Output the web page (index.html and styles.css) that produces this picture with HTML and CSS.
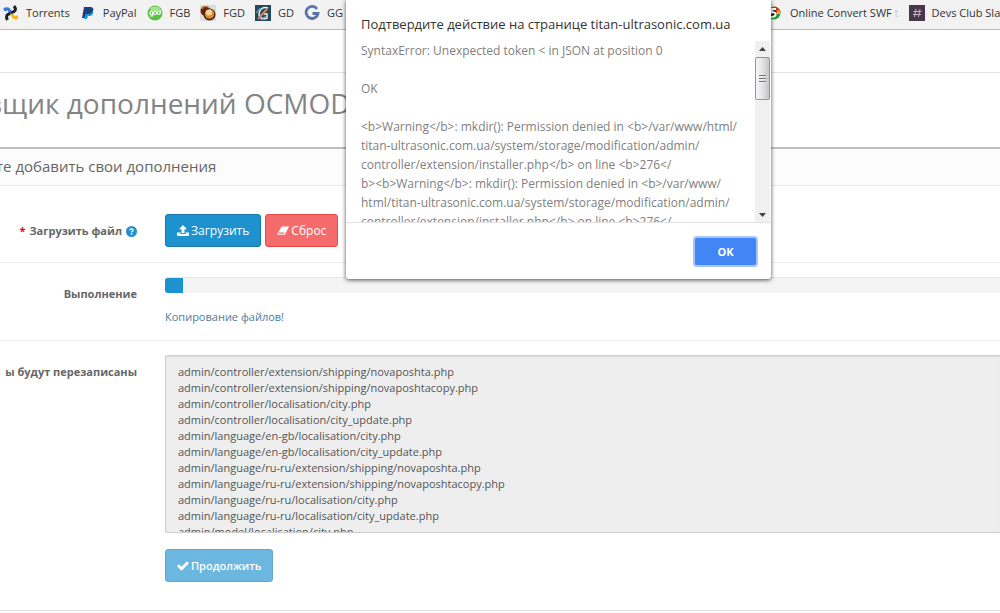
FILE: index.html
```
<!DOCTYPE html>
<html lang="ru">
	<head>
		<meta charset="utf-8">
		<meta name="viewport" content="width=device-width, initial-scale=1">
		<title>Установщик дополнений OCMOD</title>
		<link rel="stylesheet" href="styles.css">
	</head>

	<body>
		<!-- bookmarks bar -->
		<nav class="bookmarks">
			<div class="bookmarks-left">
				<a href="#" class="bookmark">
					<svg class="favicon" viewBox="0 0 16 16"><g fill="none" stroke-width="3"><path d="M1 4.500c4-2 6 0 6 3.500" stroke="#3c78dc"/><path d="M9 8c0 4 2 5.500 6 3.500" stroke="#f5b916"/><path d="M11 1c3 4 1 6-3 6.500" stroke="#222"/><path d="M7.500 8.500c-4 .5-5 3-3 6.500" stroke="#222"/></g><circle cx="13" cy="13" r="1.800" fill="#f5b916"/><circle cx="2.500" cy="4.500" r="1.800" fill="#3c78dc"/></svg>
					Torrents</a>
				<a href="#" class="bookmark">
					<svg class="favicon" viewBox="0 0 16 16"><path d="M4 2h6c3 0 4 2 3 4-1 3-3 4-5 4H6l-1 3H2z" fill="#1f3f7d"/><path d="M13 5c1 4-1 6-4 6H8l-1 3H4l1-3 1-2h2c3 0 4-1 5-4z" fill="#169bd7"/></svg>
					PayPal</a>
				<a href="#" class="bookmark">
					<svg class="favicon" viewBox="0 0 16 16"><circle cx="8" cy="8" r="7.500" fill="#55c43c"/><ellipse cx="8" cy="4" rx="5" ry="2.500" fill="#a4e594"/><g fill="none" stroke="#fff" stroke-width="1.200"><circle cx="4.200" cy="8" r="1.500"/><circle cx="8" cy="8" r="1.500"/><circle cx="11.800" cy="8" r="1.500"/><path d="M5.700 8v3H3M13.300 5v3"/></g></svg>
					FGB</a>
				<a href="#" class="bookmark">
					<svg class="favicon" viewBox="0 0 16 16"><path d="M0 0h16v16H0z" fill="#dcdcdc"/><circle cx="5.500" cy="6" r="5" fill="#6b2414"/><circle cx="9.500" cy="9.500" r="6" fill="#3c1b10"/><circle cx="9.500" cy="9" r="4.800" fill="#dc8a32"/><circle cx="9" cy="7.500" r="3" fill="#fbd795"/><path d="M2 4c2-3 5-3 7-1" fill="none" stroke="#e4a044"/></svg>
					FGD</a>
				<a href="#" class="bookmark">
					<svg class="favicon" viewBox="0 0 16 16"><path d="M0 0h16v16H0z" fill="#25485c"/><path d="M13 3C8 1 4 5 4 9s4 6 8 4V9H9" fill="none" stroke="#e8eef0" stroke-width="1.500"/><path d="M3 14L12 4" stroke="#d98452" stroke-width="2"/><path d="M1 8l4-5M6 15l6-5" stroke="#8fb0bf"/></svg>
					GD</a>
				<a href="#" class="bookmark">
					<svg class="favicon" viewBox="0 0 16 16"><path d="M13 4A6 6 0 1 0 14 8.500H8.500" fill="none" stroke="#5673ab" stroke-width="2.800"/></svg>
					GG</a>
			</div>
			<div class="bookmarks-right">
				<a href="#" class="bookmark">
					<svg class="favicon" viewBox="0 0 16 16"><circle cx="7" cy="8" r="6.500" fill="#159a35"/><path d="M7 1.500a6.500 6.500 0 0 1 6.500 6.500H7z" fill="#e32b1d"/><path d="M10 5l3 1v3h-3z" fill="#f6b90c"/><circle cx="4" cy="8" r="5" fill="#1b1b1b"/><path d="M9 4H5v3.500c5-1 5 4.500-1 4.500" fill="none" stroke="#fff" stroke-width="2"/></svg>
					<span>Online Convert SWF <span class="faded">t</span></span></a>
				<a href="#" class="bookmark">
					<svg class="favicon" viewBox="0 0 16 16"><path d="M0 0h16v16H0z" fill="#4b374b"/><path d="M7 4l-1.500 8M11 4L9.500 12M4.500 6.500h8M4 9.500h8" stroke="#c3b8c3"/></svg>
					Devs Club Sla</a>
			</div>
		</nav>

		<!-- admin page -->
		<div class="topline"></div>
		<header class="page-header">
			<h1>вщик дополнений OCMOD</h1>
		</header>
		<main class="panel">
			<div class="panel-heading">
				<h3>те добавить свои дополнения</h3>
			</div>
			<form class="panel-body">
				<div class="form-group">
					<label class="control-label" for="button-upload"><span class="required">*</span> Загрузить файл
						<svg class="help" viewBox="0 0 12 12"><circle cx="6" cy="6" r="6" fill="#1e91cf"/><path d="M4.200 4.700C4.200 2.500 8 2.600 7.800 4.600 7.700 5.700 6 5.700 6 7.200" fill="none" stroke="#fff" stroke-width="1.500"/><path d="M5.200 8h1.600v1.500H5.200z" fill="#fff"/></svg></label>
					<div class="field buttons">
						<button type="button" class="btn btn-primary" id="button-upload">
							<svg class="icon" viewBox="0 0 12 12"><path d="M6 0l4 4.200H7.500V8h-3V4.200H2zM0 7.500h3.500V9h5V7.500H12V11H0z"/></svg>
							Загрузить</button>
						<button type="button" class="btn btn-danger">
							<svg class="icon" viewBox="0 0 13 12"><path d="M5 1h8L8.500 10H0zM2 7.500L1.200 9.100H7.500L8.300 7.500z" fill-rule="evenodd"/></svg>
							Сброс</button>
					</div>
				</div>
				<div class="form-group">
					<span class="control-label">Выполнение</span>
					<div class="field">
						<div class="progress" role="progressbar" aria-label="Выполнение"><div class="progress-bar"></div></div>
						<div class="progress-text">Копирование файлов!</div>
					</div>
				</div>
				<div class="form-group">
					<label class="control-label" for="overwrite">ы будут перезаписаны</label>
					<div class="field">
						<textarea id="overwrite" class="overwrite" readonly>
admin/controller/extension/shipping/novaposhta.php
admin/controller/extension/shipping/novaposhtacopy.php
admin/controller/localisation/city.php
admin/controller/localisation/city_update.php
admin/language/en-gb/localisation/city.php
admin/language/en-gb/localisation/city_update.php
admin/language/ru-ru/extension/shipping/novaposhta.php
admin/language/ru-ru/extension/shipping/novaposhtacopy.php
admin/language/ru-ru/localisation/city.php
admin/language/ru-ru/localisation/city_update.php
admin/model/localisation/city.php</textarea>
						<button type="button" class="btn btn-primary" disabled>
							<svg class="icon" viewBox="0 0 12 12"><path d="M0 6.300L2 4.200l2.600 2.500L10 1.300l2 2L4.600 10.700z"/></svg>
							Продолжить</button>
					</div>
				</div>
			</form>
		</main>

		<!-- alert window -->
		<div class="dialog" role="alertdialog" aria-labelledby="dialog-title">
			<h2 id="dialog-title">Подтвердите действие на странице titan-ultrasonic.com.ua</h2>
			<div class="dialog-body">
				<div class="message">SyntaxError: Unexpected token &lt; in JSON at position 0

OK

&lt;b&gt;Warning&lt;/b&gt;: mkdir(): Permission denied in &lt;b&gt;/var/www/html/
titan-ultrasonic.com.ua/system/storage/modification/admin/
controller/extension/installer.php&lt;/b&gt; on line &lt;b&gt;276&lt;/
b&gt;&lt;b&gt;Warning&lt;/b&gt;: mkdir(): Permission denied in &lt;b&gt;/var/www/
html/titan-ultrasonic.com.ua/system/storage/modification/admin/
controller/extension/installer.php&lt;/b&gt; on line &lt;b&gt;276&lt;/</div>
				<div class="scrollbar">
					<svg class="arrow" viewBox="0 0 15 16"><path d="M4 10l3.500-4L11 10z"/></svg>
					<div class="thumb"><i></i><i></i><i></i></div>
					<svg class="arrow arrow-down" viewBox="0 0 15 16"><path d="M4 7l3.500 4L11 7z"/></svg>
				</div>
			</div>
			<div class="dialog-footer">
				<button type="button" class="ok">OK</button>
			</div>
		</div>
	</body>
</html>
```
FILE: styles.css
```
* {
	box-sizing: border-box;
}

body {
	margin: 0;
	font-family: "Open Sans", sans-serif;
	font-size: 12px;
	line-height: 18px;
	color: #666;
	background: #fff;
	overflow: hidden;
}

h1, h2, h3 {
	margin: 0;
	font-weight: 400;
}

/* bookmarks */
.bookmarks {
	display: flex;
	justify-content: space-between;
	height: 30px;
	padding: 0 0 3px 3px;
	font-size: 11px;
	background: #f2f2f2;
	border-bottom: 1px solid #bdbdbd;
	overflow: hidden;
}

.bookmarks-left,
.bookmarks-right {
	display: flex;
	gap: 10px;
}

.bookmarks-right {
	flex: 0 0 233px;
	overflow: hidden;
}

.bookmark {
	display: flex;
	align-items: center;
	gap: 7px;
	color: #333;
	text-decoration: none;
	white-space: nowrap;
}

.favicon {
	width: 16px;
	height: 16px;
	flex: none;
}

.faded {
	color: #ccc;
}

/* page */
.topline {
	height: 43px;
	border-bottom: 1px solid #e4e4e4;
}

.page-header {
	height: 74px;
	padding-top: 10px;
}

.page-header h1 {
	margin-left: -14px;
	font-size: 28px;
	line-height: 40px;
	color: #848484;
	white-space: nowrap;
}

.panel {
	border-top: 2px solid #bfbfbf;
	border-bottom: 1px solid #e2e2e2;
}

.panel-heading {
	padding: 7px 0 9px;
	background: #fcfcfc;
	border-bottom: 1px solid #e8e8e8;
}

.panel-heading h3 {
	margin-left: -4px;
	font-size: 15px;
	line-height: 20px;
	color: #666;
}

.panel-body {
	padding: 13px 0 14px;
}

.form-group {
	display: flex;
	gap: 28px;
	padding: 15px 0;
}

.form-group + .form-group {
	padding: 14px 0;
	border-top: 1px solid #ededed;
}

.control-label {
	display: flex;
	flex: 0 0 137px;
	gap: 4px;
	align-items: center;
	justify-content: flex-end;
	align-self: flex-start;
	padding-top: 8px;
	font-size: 11px;
	font-weight: 700;
	white-space: nowrap;
}

.required {
	color: #f00;
}

.help {
	width: 11px;
	height: 11px;
}

.field {
	flex: 1;
	min-width: 0;
}

.buttons {
	display: flex;
	gap: 4px;
}

.btn {
	display: flex;
	align-items: center;
	gap: 2px;
	height: 33px;
	padding: 0 11px;
	font: inherit;
	color: #fff;
	border: 1px solid;
	border-radius: 3px;
	cursor: pointer;
}

.btn-primary {
	background: #1e91cf;
	border-color: #1978ab;
}

.btn-danger {
	background: #f56b6b;
	border-color: #f24545;
}

.btn:disabled {
	opacity: 0.65;
	font-size: 11px;
	font-weight: 600;
	cursor: default;
}

.icon {
	width: 12px;
	height: 12px;
	fill: #fff;
}

.progress {
	height: 16px;
	background: #f4f4f4;
	border-top: 1px solid #e6e6e6;
	border-radius: 3px 0 0 3px;
	overflow: hidden;
}

.progress-bar {
	width: 18px;
	height: 100%;
	background: #1e91cf;
}

.progress-text {
	padding-top: 15px;
	font-size: 11px;
	color: #4c7d9b;
}

.overwrite {
	display: block;
	width: 100%;
	height: 178px;
	margin-bottom: 16px;
	padding: 8px 12px;
	font: inherit;
	font-size: 11px;
	line-height: 16px;
	color: #555;
	background: #eee;
	border: 1px solid #ccc;
	border-right: 0;
	border-radius: 3px 0 0 3px;
	box-shadow: inset 0 1px 1px rgba(0, 0, 0, 0.08);
	resize: none;
	overflow: hidden;
}

/* alert window */
.dialog {
	position: absolute;
	top: 0;
	left: 346px;
	width: 425px;
	background: #fff;
	border-radius: 0 0 3px 3px;
	box-shadow: 0 1px 4px rgba(0, 0, 0, 0.7);
}

.dialog h2 {
	padding: 14px 15px 7px;
	font-size: 13px;
	line-height: 20px;
	color: #333;
	white-space: nowrap;
}

.dialog-body {
	display: flex;
	justify-content: space-between;
	height: 181px;
	padding-right: 1px;
}

.message {
	padding-left: 15px;
	line-height: 19px;
	color: #808080;
	white-space: pre;
	overflow: hidden;
}

.scrollbar {
	display: flex;
	flex-direction: column;
	flex: 0 0 15px;
	background: #f0f0f0;
}

.arrow {
	height: 16px;
	fill: #444;
}

.arrow-down {
	margin-top: auto;
}

.thumb {
	display: flex;
	flex-direction: column;
	align-items: center;
	justify-content: center;
	gap: 1px;
	height: 43px;
	background: linear-gradient(to right, #f6f6f6, #e4e4e6 50%, #c4c4c8);
	border: 1px solid #979797;
	border-radius: 2px;
}

.thumb i {
	width: 7px;
	height: 2px;
	background: #777;
	border-bottom: 1px solid #eee;
}

.dialog-footer {
	display: flex;
	justify-content: flex-end;
	padding: 15px 15px 14px;
	border-top: 1px solid #e2e2e2;
}

.ok {
	width: 61px;
	height: 27px;
	font: inherit;
	font-size: 11px;
	font-weight: 700;
	color: #fff;
	background: #4285f4;
	border: 0;
	border-radius: 2px;
	box-shadow: 0 0 0 2px #a5c5fb;
	cursor: pointer;
}
```
